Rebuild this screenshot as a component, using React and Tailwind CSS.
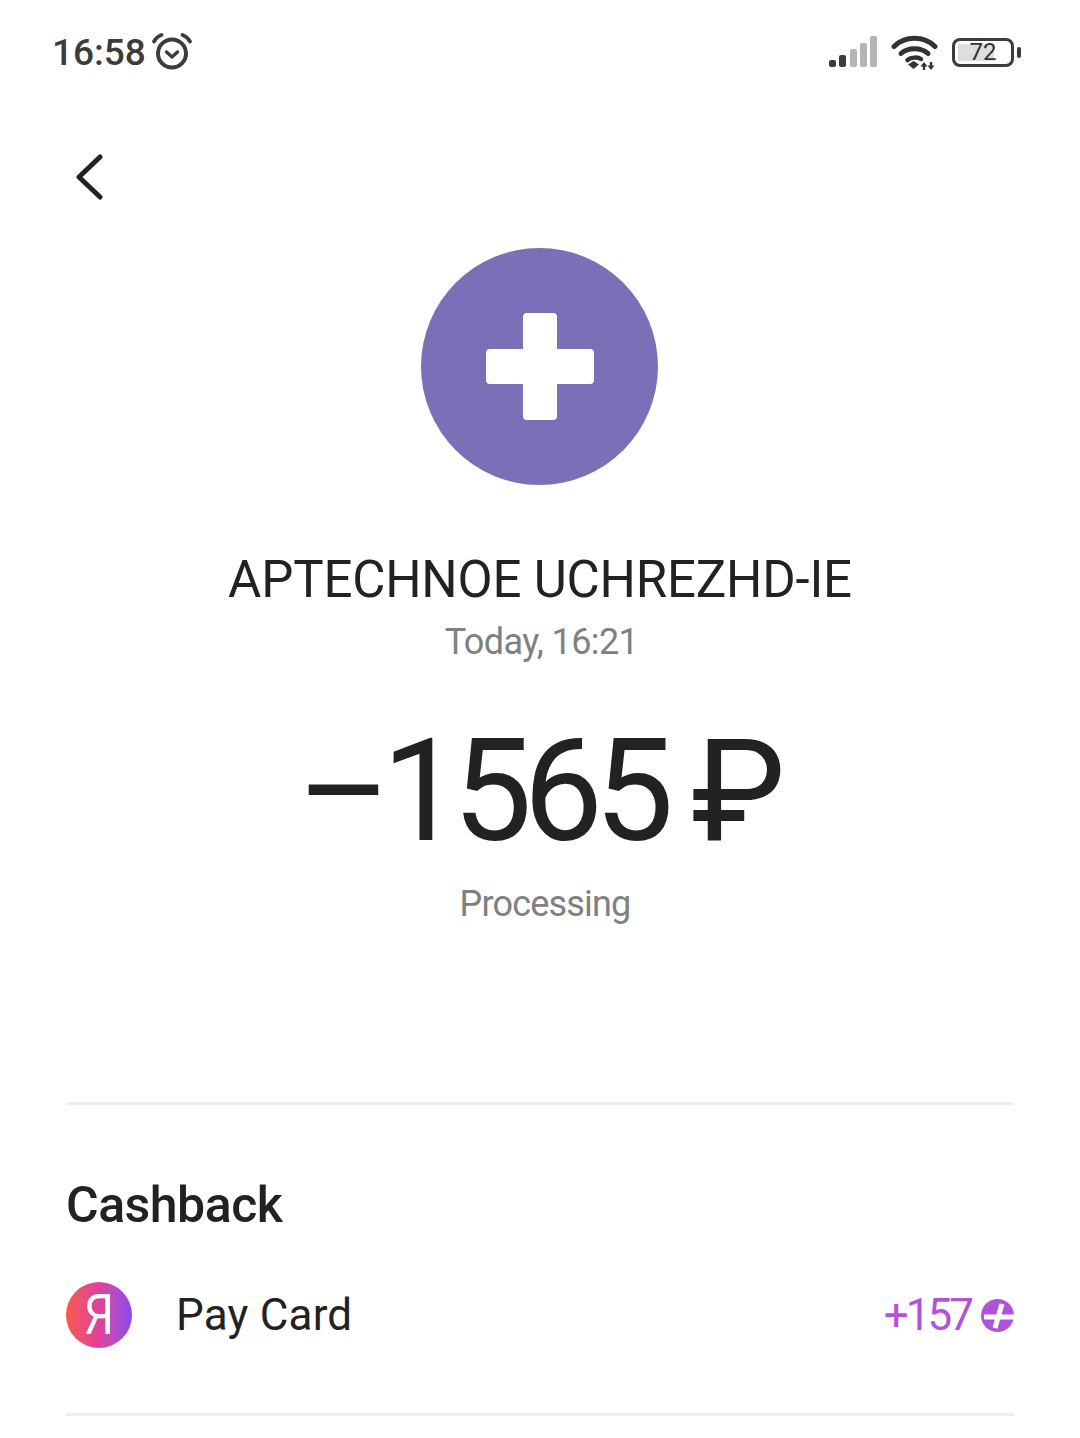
const sans = "font-['Roboto','Liberation_Sans',Arial,sans-serif]";

function Alarm() {
  return (
    <svg width="42" height="40" viewBox="0 0 42 40" fill="none" stroke="#3c3c3c" strokeLinecap="round" strokeLinejoin="round">
      <circle cx="21" cy="21.5" r="14" strokeWidth="4" />
      <path d="M15.5 20l5.5 5 5.5-5" strokeWidth="3.4" />
      <path d="M3 9.5C5 6 7.5 4 10.5 3" strokeWidth="3.8" />
      <path d="M39 9.5C37 6 34.500 4 31.500 3" strokeWidth="3.8" />
    </svg>
  );
}

function Signal() {
  return (
    <svg width="50" height="34" viewBox="0 0 50 34">
      <rect x="1" y="25" width="7" height="7" rx="2" fill="#3c3c3c" />
      <rect x="11" y="20" width="7" height="12" rx="2" fill="#3c3c3c" />
      <rect x="22" y="14" width="7" height="18" rx="2" fill="#b5b5b5" />
      <rect x="32" y="8" width="7" height="24" rx="2" fill="#b5b5b5" />
      <rect x="42" y="1" width="7" height="31" rx="2" fill="#b5b5b5" />
    </svg>
  );
}

function Wifi() {
  return (
    <svg width="48" height="36" viewBox="0 0 48 36" fill="none">
      <path d="M3 12.500C14 1.500 33 1.500 44 12.500" stroke="#333" strokeWidth="5" strokeLinecap="round" />
      <path d="M10 19.500C17 13 30 13 37 19.500" stroke="#333" strokeWidth="5" strokeLinecap="round" />
      <path d="M16.500 26C20 23 27 23 30 25" stroke="#333" strokeWidth="4.500" strokeLinecap="round" />
      <path d="M17 30.500L22.500 27L28 30.500L22.500 35Z" fill="#333" />
      <path d="M33 36V30" stroke="#333" strokeWidth="2.400" />
      <path d="M33 28L29.500 32.500H36.500Z" fill="#333" />
      <path d="M40 28V34" stroke="#333" strokeWidth="2.400" />
      <path d="M40 36L36.500 31.500H43.500Z" fill="#333" />
    </svg>
  );
}

function Battery() {
  return (
    <div className="flex items-center gap-[3px]">
      <div className="relative w-[62px] h-[29px] rounded-[8px] border-[3px] border-[#3c3c3c] p-[3px]">
        <div className="h-full w-[36px] bg-[#dedede]" />
        <span className="absolute inset-0 flex items-center justify-center text-[24px] leading-none text-[#333]">72</span>
      </div>
      <div className="w-[4px] h-[11px] rounded-[2px] bg-[#3c3c3c]" />
    </div>
  );
}

function YaBadge() {
  return (
    <div className="w-[66px] h-[66px] rounded-full bg-gradient-to-r from-[#f8584a] via-[#e0409a] to-[#8a46f0] flex items-center justify-center">
      <span className="text-white text-[56px] leading-none scale-x-[0.85]">Я</span>
    </div>
  );
}

function PlusCoin() {
  return (
    <svg width="33" height="33" viewBox="0 0 33 33">
      <circle cx="16.500" cy="16.500" r="16.500" fill="#b153d9" />
      <path d="M3 18H33M21 5L14 29" stroke="#fff" strokeWidth="5" />
    </svg>
  );
}

export default function App() {
  return (
    <div className={`w-[1080px] h-[1438px] bg-white overflow-hidden ${sans}`}>
      <div className="h-[104px] pl-[52px] pr-[59px] flex items-center justify-between">
        <div className="flex items-center gap-[5px]">
          <span className="text-[37px] leading-none font-medium text-[#3c3c3c]">16:58</span>
          <Alarm />
        </div>
        <div className="flex items-center gap-[13px]">
          <Signal />
          <Wifi />
          <Battery />
        </div>
      </div>

      <div className="pl-[74px] pt-[46px] h-[144px]">
        <svg width="32" height="50" viewBox="0 0 32 50" fill="none">
          <path d="M26 7L5 27L26 47" stroke="#222" strokeWidth="5" strokeLinecap="round" strokeLinejoin="round" />
        </svg>
      </div>

      <div className="flex flex-col items-center">
        <div className="w-[237px] h-[237px] -ml-[1px] rounded-full bg-[#7a70b8] flex items-center justify-center">
          <svg width="108" height="108" viewBox="0 0 108 108">
            <path d="M41 0H67A4 4 0 0 1 71 4V36H104A4 4 0 0 1 108 40V67A4 4 0 0 1 104 71H71V103A4 4 0 0 1 67 107H41A4 4 0 0 1 37 103V71H4A4 4 0 0 1 0 67V40A4 4 0 0 1 4 36H37V4A4 4 0 0 1 41 0Z" fill="#fff" />
          </svg>
        </div>
        <div className="mt-[65px] text-[51px] leading-[60px] tracking-[-0.2px] text-[#222] whitespace-nowrap">APTECHNOE UCHREZHD-IE</div>
        <div className="mt-[10px] ml-[3px] text-[36px] leading-[44px] tracking-[-0.6px] text-[#808080]">Today, 16:21</div>
        <div className="mt-[48px] -ml-[6px] text-[142px] leading-[160px] tracking-[-9px] text-[#222] whitespace-nowrap">–1565 ₽</div>
        <div className="mt-[10px] ml-[10px] text-[36px] leading-[44px] tracking-[-0.8px] text-[#808080]">Processing</div>
      </div>

      <div className="mx-[66px] mt-[176px] h-[3px] bg-[#ececec]" />

      <div className="mx-[66px] mt-[70px] text-[50px] leading-[60px] font-medium tracking-[-0.5px] text-[#222]">Cashback</div>

      <div className="mx-[66px] mt-[47px] flex items-center justify-between">
        <div className="flex items-center gap-[44px]">
          <YaBadge />
          <span className="text-[44px] leading-[52px] tracking-[0.2px] text-[#222]">Pay Card</span>
        </div>
        <div className="flex items-center gap-[10px]">
          <span className="text-[44px] leading-[52px] tracking-[-3px] text-[#b153d9]">+157</span>
          <PlusCoin />
        </div>
      </div>

      <div className="mx-[66px] mt-[65px] h-[3px] bg-[#ececec]" />
    </div>
  );
}
